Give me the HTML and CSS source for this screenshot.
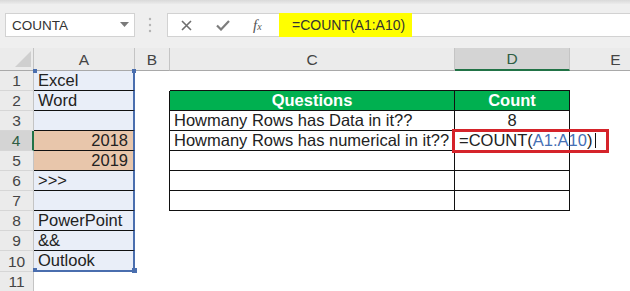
FILE: index.html
```html
<!DOCTYPE html>
<html lang="en">
<head>
  <meta charset="UTF-8">
  <title>COUNT in Excel</title>
  <link rel="stylesheet" href="styles.css">
</head>
<body>
  <div class="app">
    <div class="topstrip"></div>

    <div class="formula-row">
      <div class="namebox">
        <span>COUNTA</span>
        <svg class="drop" width="9" height="5" viewBox="0 0 9 5"><polygon points="0,0 9,0 4.5,5" fill="#7a7a7a"/></svg>
      </div>
      <svg class="grip" width="4" height="16" viewBox="0 0 4 16">
        <circle cx="2" cy="2" r="1.2" fill="#b4b4b4"/>
        <circle cx="2" cy="8" r="1.2" fill="#b4b4b4"/>
        <circle cx="2" cy="14" r="1.2" fill="#b4b4b4"/>
      </svg>
      <div class="fbar">
        <div class="fbtns">
          <svg class="btn-x" width="11" height="11" viewBox="0 0 11 11">
            <path d="M1 1 L10 10 M10 1 L1 10" stroke="#6e6e6e" stroke-width="1.6" fill="none"/>
          </svg>
          <svg class="btn-ok" width="14" height="11" viewBox="0 0 14 11">
            <path d="M1 5.5 L5 9.5 L13 1" stroke="#7d7d7d" stroke-width="2.2" fill="none"/>
          </svg>
          <span class="fx">f<small>x</small></span>
        </div>
        <div class="finput"><span class="fhl">=COUNT(A1:A10)</span></div>
      </div>
    </div>

    <div class="grid-wrap">
      <table class="sheet">
        <colgroup>
          <col class="w-rh"><col class="w-a"><col class="w-b"><col class="w-c"><col class="w-d"><col class="w-e">
        </colgroup>
        <tr class="colhead">
          <td class="corner"><svg width="34" height="22" viewBox="0 0 34 22"><polygon points="31,3 31,19 15,19" fill="#cfcfcf"/></svg></td>
          <td>A</td><td>B</td><td>C</td><td class="cur">D</td><td>E</td>
        </tr>
        <tr>
          <td class="rh">1</td><td class="a">Excel</td><td></td><td class="tb"></td><td class="tb"></td><td></td>
        </tr>
        <tr>
          <td class="rh">2</td><td class="a">Word</td><td class="lb"></td><td class="q hd">Questions</td><td class="q hd">Count</td><td></td>
        </tr>
        <tr>
          <td class="rh">3</td><td class="a"></td><td class="lb"></td><td class="q">Howmany Rows has Data in it??</td><td class="q mid">8</td><td></td>
        </tr>
        <tr>
          <td class="rh cur">4</td><td class="a tan num">2018</td><td class="lb"></td><td class="q">Howmany Rows has numerical in it??</td>
          <td class="q edit"><span class="redbox"></span>=COUNT(<span class="ref">A1:A10</span>)<span class="caret"></span></td><td></td>
        </tr>
        <tr>
          <td class="rh">5</td><td class="a tan num">2019</td><td class="lb"></td><td class="q"></td><td class="q"></td><td></td>
        </tr>
        <tr>
          <td class="rh">6</td><td class="a">&gt;&gt;&gt;</td><td class="lb"></td><td class="q"></td><td class="q"></td><td></td>
        </tr>
        <tr>
          <td class="rh">7</td><td class="a"></td><td class="lb"></td><td class="q"></td><td class="q"></td><td></td>
        </tr>
        <tr>
          <td class="rh">8</td><td class="a">PowerPoint</td><td></td><td></td><td></td><td></td>
        </tr>
        <tr>
          <td class="rh">9</td><td class="a">&amp;&amp;</td><td></td><td></td><td></td><td></td>
        </tr>
        <tr>
          <td class="rh">10</td><td class="a last">Outlook</td><td></td><td></td><td></td><td></td>
        </tr>
        <tr>
          <td class="rh">11</td><td></td><td></td><td></td><td></td><td></td>
        </tr>
      </table>

      <!-- range handles of A1:A10 -->
      <span class="handle h-tl"></span>
      <span class="handle h-tr"></span>
      <span class="handle h-bl"></span>
      <span class="handle h-br"></span>
    </div>
  </div>
</body>
</html>
```

FILE: styles.css
```css
body {
  margin: 0;
  background: #ffffff;
  font-family: "Liberation Sans", Arial, sans-serif;
}

.app {
  width: 630px;
  height: 291px;
  overflow: hidden;
  background: #fff;
}

.topstrip {
  height: 4px;
  background: linear-gradient(#d9d9d9, #ebebeb);
}

.formula-row {
  height: 44px;
  box-sizing: border-box;
  padding-top: 9px;
  display: flex;
  align-items: flex-start;
  background: #efefef;
}

.namebox {
  margin-left: 5px;
  width: 130px;
  height: 24px;
  box-sizing: border-box;
  background: #fff;
  border: 1px solid #d2d2d2;
  display: flex;
  align-items: center;
  justify-content: space-between;
  padding: 0 5px 0 6px;
  font-size: 13.5px;
  color: #333;
}

.namebox .drop {
  margin-top: -2px;
}

.grip {
  margin: 4px 15px 0 13px;
}

.fbar {
  flex: 1;
  height: 24px;
  box-sizing: border-box;
  background: #fff;
  border: 1px solid #d2d2d2;
  border-right: none;
  display: flex;
}

.fbtns {
  width: 111px;
  display: flex;
  align-items: center;
}

.btn-x {
  margin-left: 13px;
}

.btn-ok {
  margin-left: 24px;
}

.fx {
  margin-left: 23px;
  font-family: "Liberation Serif", "Times New Roman", serif;
  font-style: italic;
  font-size: 15px;
  color: #555;
}

.fx small {
  font-size: 10px;
}

.finput {
  flex: 1;
  margin: -1px 0;
}

.fhl {
  display: inline-block;
  width: 133px;
  height: 24px;
  box-sizing: border-box;
  padding-left: 13px;
  line-height: 24px;
  background: #ffff00;
  font-size: 14px;
  color: #333;
}

.grid-wrap {
  position: relative;
}

.sheet {
  width: 662px;
  table-layout: fixed;
  border-collapse: separate;
  border-spacing: 0;
  font-size: 16.5px;
  color: #222;
}

.w-rh { width: 34px; }
.w-a { width: 101px; }
.w-b { width: 35px; }
.w-c { width: 285px; }
.w-d { width: 115px; }
.w-e { width: 92px; }

.sheet td {
  height: 20px;
  padding: 0 4px;
  line-height: 19px;
  white-space: nowrap;
  overflow: visible;
  box-sizing: border-box;
}

.colhead td {
  height: 22px;
  background: #ebebeb;
  border-right: 1px solid #c4c4c4;
  border-bottom: 1px solid #a9a9a9;
  text-align: center;
  font-size: 15.5px;
  color: #444;
  line-height: 21px;
}

.colhead td.corner {
  padding: 0;
  line-height: 0;
  vertical-align: top;
}

.colhead td.cur {
  background: #d4d4d4;
  color: #2f5d43;
  border-bottom: 2px solid #217346;
}

.rh {
  background: #ebebeb;
  border-right: 1px solid #c4c4c4;
  border-bottom: 1px solid #d6d6d6;
  text-align: center;
  font-size: 15.5px;
  color: #444;
  padding: 0 !important;
}

.rh.cur {
  background: #d4d4d4;
  color: #2f5d43;
  border-right: 2px solid #217346;
}

.a {
  background: #e9eef8;
  border-bottom: 1px solid #111;
  border-right: 2px solid #4a6eae;
}

.a.last {
  border-bottom: 2px solid #4a6eae;
}

.a.tan {
  background: #e8c6ab;
}

.num {
  text-align: right;
  padding-right: 5px !important;
}

.lb {
  border-right: 1px solid #111;
}

.tb {
  border-bottom: 1px solid #111;
}

.q {
  border-right: 1px solid #111;
  border-bottom: 1px solid #111;
}

.hd {
  background: #00b050;
  color: #fff;
  font-weight: bold;
  text-align: center;
}

.mid {
  text-align: center;
}

.edit {
  position: relative;
}

.redbox {
  position: absolute;
  left: -3px;
  top: -2px;
  width: 157px;
  height: 24px;
  box-sizing: border-box;
  border: 3px solid #d5232a;
}

.ref {
  color: #4670b5;
}

.caret {
  display: inline-block;
  width: 1px;
  height: 15px;
  margin-left: 3px;
  vertical-align: -2px;
  background: #111;
}

.handle {
  position: absolute;
  width: 4px;
  height: 4px;
  background: #4a6eae;
}

.h-tl { left: 33px; top: 21px; }
.h-tr { left: 132px; top: 21px; }
.h-bl { left: 33px; top: 220px; }
.h-br { left: 132px; top: 220px; width: 5px; height: 5px; }
```
